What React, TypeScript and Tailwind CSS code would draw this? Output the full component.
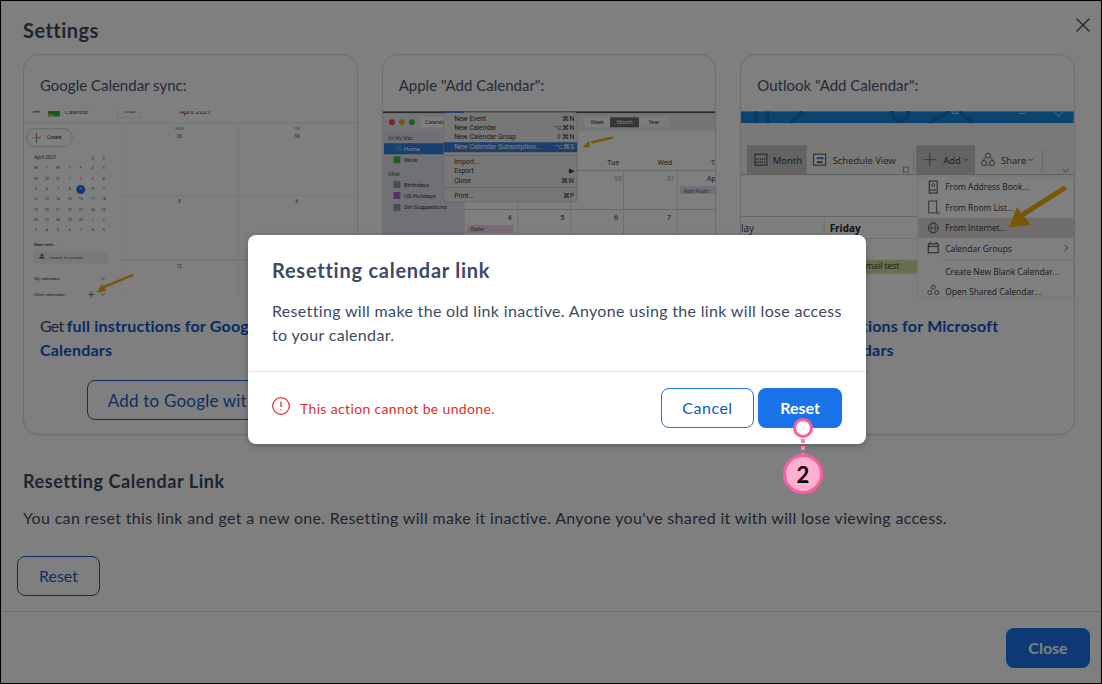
import React from "react";
import { X } from "lucide-react";

const T = ({ x, y, s = 4, c = "#3c4043", w, a, children }: any) => (
  <text x={x} y={y} fontSize={s} fill={c} fontWeight={w} textAnchor={a} fontFamily="Roboto, sans-serif">{children}</text>
);

const Arrow = ({ d, tip, w = 3 }: { d: string; tip: string; w?: number }) => (
  <g>
    <path d={d} stroke="#f0b010" strokeWidth={w} strokeLinecap="round" fill="none" />
    <path d={tip} fill="#f0b010" />
  </g>
);

const miniRows = [
  ["M", "T", "W", "T", "F", "S", "S"],
  ["29", "30", "31", "1", "2", "3", "4"],
  ["5", "6", "7", "8", "9", "10", "11"],
  ["12", "13", "14", "15", "16", "17", "18"],
  ["19", "20", "21", "22", "23", "24", "25"],
  ["26", "27", "28", "29", "30", "1", "2"],
  ["3", "4", "5", "6", "7", "8", "9"],
];
const miniX = [36, 47, 58, 70, 81, 93, 104];
const miniY = [169, 180, 190, 200, 211, 221, 231];

function GoogleShot() {
  return (
    <svg viewBox="24 111 334 187" className="block w-full h-[187px] bg-white">
      <rect x="33" y="111" width="7" height="1" fill="#555" />
      <rect x="48" y="110" width="12" height="6" fill="#34a853" />
      <rect x="48" y="114" width="6" height="2" fill="#fbbc04" />
      <T x="65" y="114" s={6} c="#5f6368">Calendar</T>
      <rect x="117.500" y="106" width="24" height="11" fill="none" stroke="#dadce0" strokeWidth="0.7" />
      <T x="123" y="113" s={5} c="#5f6368">Today</T>
      <T x="180" y="114" s={7} c="#3c4043">April 2021</T>
      <line x1="24" y1="122.500" x2="358" y2="122.500" stroke="#e3e5e8" />
      <line x1="121" y1="195.500" x2="358" y2="195.500" stroke="#e8eaed" />
      <line x1="121" y1="260.500" x2="358" y2="260.500" stroke="#dadce0" />
      <line x1="121.500" y1="123" x2="121.500" y2="298" stroke="#f6f6f8" />
      <line x1="239.500" y1="123" x2="239.500" y2="298" stroke="#f0f1f3" />
      <T x="180" y="130" s={3.6} a="middle" c="#70757a">MON</T>
      <T x="180" y="138" s={4.6} a="middle">29</T>
      <T x="298" y="130" s={3.6} a="middle" c="#70757a">TUE</T>
      <T x="298" y="138" s={4.6} a="middle">30</T>
      <T x="180" y="203" s={4.6} a="middle">5</T>
      <T x="298" y="203" s={4.6} a="middle">6</T>
      <T x="180" y="268" s={4.6} a="middle">12</T>
      <rect x="26.500" y="128.500" width="46" height="18" rx="9" fill="#fff" stroke="#d0d0d0" />
      <path d="M36.500 133v5" stroke="#ea4335" strokeWidth="1" />
      <path d="M36.500 138v5" stroke="#34a853" strokeWidth="1" />
      <path d="M32 137.500h5" stroke="#fbbc04" strokeWidth="1" />
      <path d="M37 137.500h4" stroke="#4285f4" strokeWidth="1" />
      <T x="47" y="139" s={5}>Create</T>
      <T x="34" y="159" s={5}>April 2021</T>
      <path d="M94 156l-2 2 2 2M103 156l2 2-2 2" fill="none" stroke="#5f6368" strokeWidth="0.7" />
      <circle cx="81" cy="189.500" r="4.500" fill="#1a73e8" />
      {miniRows.map((r, i) =>
        r.map((d, j) => (
          <T key={`n${i}-${j}`} x={miniX[j]} y={miniY[i]} s={3.4} a="middle" c={i === 2 && j === 4 ? "#ffffff" : "#3c4043"}>
            {d}
          </T>
        ))
      )}
      <T x="34" y="246" s={4.4} w={500}>Meet with...</T>
      <rect x="34" y="251" width="74" height="13" rx="1" fill="#f1f3f4" />
      <circle cx="42" cy="255.500" r="1.500" fill="#70757a" />
      <path d="M39 259c0-3 6-3 6 0z" fill="#70757a" />
      <T x="50" y="259" s={4.2} c="#5f6368">Search for people</T>
      <T x="34" y="280" s={4.4}>My calendars</T>
      <path d="M101.500 278l1.800 1.800 1.800-1.800" fill="none" stroke="#3c4043" strokeWidth="0.7" />
      <T x="34" y="296.500" s={4.4}>Other calendars</T>
      <path d="M91.500 292v6M88.500 295h6" stroke="#3c4043" strokeWidth="0.7" />
      <path d="M101.500 294l1.800 1.800 1.800-1.800" fill="none" stroke="#3c4043" strokeWidth="0.7" />
      <Arrow d="M133 275.500L104 287.500" tip="M97 293L102 284L107 291Z" w={2.500} />
    </svg>
  );
}

function AppleShot() {
  return (
    <svg viewBox="382 111 334 187" className="block w-full h-[187px] bg-white">
      <rect x="382" y="111" width="334" height="2" fill="#555" />
      <rect x="382" y="113" width="334" height="18" fill="#e8eaec" />
      <circle cx="391" cy="122" r="3" fill="#ed4a45" />
      <circle cx="401" cy="122" r="3" fill="#e7b52d" />
      <circle cx="411" cy="122" r="3" fill="#3fbb45" />
      <rect x="420" y="117" width="30" height="10" rx="1.500" fill="#fff" />
      <T x="424" y="124" s={5.500} c="#444">Calendars</T>
      <rect x="584" y="117" width="86" height="10" rx="1.500" fill="#f8f8f8" />
      <rect x="610" y="117" width="29" height="10" fill="#6a6a6a" />
      <T x="597" y="124" s={5.500} a="middle" c="#444">Week</T>
      <T x="624.500" y="124" s={5.500} a="middle" c="#fff">Month</T>
      <T x="654" y="124" s={5.500} a="middle" c="#444">Year</T>
      <rect x="382" y="131" width="81" height="167" fill="#dfe3e8" />
      <T x="387" y="140" s={5} c="#555">On My Mac</T>
      <rect x="383" y="143" width="80" height="11" fill="#2f7fe0" />
      <rect x="395" y="145" width="6" height="6" rx="1" fill="#3aa0c8" />
      <T x="403" y="150.500" s={6} c="#fff">Home</T>
      <rect x="392.500" y="156" width="7" height="7" rx="1" fill="#3fbb45" />
      <T x="403" y="162" s={6} c="#333">Work</T>
      <T x="387" y="176" s={5} c="#555">Other</T>
      <rect x="392.500" y="181" width="7" height="7" rx="1" fill="#8a9ab0" />
      <T x="403" y="186.500" s={6} c="#333">Birthdays</T>
      <rect x="392.500" y="192" width="7" height="7" rx="1" fill="#b060d0" />
      <T x="403" y="198" s={6} c="#333">US Holidays</T>
      <rect x="392.500" y="204" width="7" height="7" rx="1" fill="#8a9ab0" />
      <T x="403" y="209.500" s={6} c="#333">Siri Suggestions</T>
      <line x1="463" y1="170.500" x2="716" y2="170.500" stroke="#ccc" />
      <line x1="463" y1="209.500" x2="716" y2="209.500" stroke="#ccc" />
      {[463, 517, 570, 623, 677].map((x) => (
        <line key={x} x1={x + 0.5} y1="170" x2={x + 0.5} y2="298" stroke="#ddd" />
      ))}
      <T x="613" y="165" s={7.500} a="middle" c="#444">Tue</T>
      <T x="665" y="165" s={7.500} a="middle" c="#444">Wed</T>
      <T x="711" y="165" s={7.500} c="#444">Thu</T>
      <T x="618" y="181" s={7.500} a="middle" c="#aaa">30</T>
      <T x="671" y="181" s={7.500} a="middle" c="#aaa">31</T>
      <T x="707" y="181" s={7.500} c="#333">Apr</T>
      <rect x="680" y="186" width="36" height="8" fill="#e8d8f0" />
      <T x="684" y="192.500" s={5.200} c="#555">April Fools'</T>
      <T x="509" y="220" s={7.500} a="middle" c="#333">4</T>
      <T x="562" y="220" s={7.500} a="middle" c="#333">5</T>
      <T x="616" y="220" s={7.500} a="middle" c="#333">6</T>
      <T x="669" y="220" s={7.500} a="middle" c="#333">7</T>
      <rect x="466" y="225" width="47" height="8" fill="#f3d0ec" />
      <T x="470" y="231.500" s={5} c="#555">Easter</T>
      <rect x="443" y="112" width="134" height="90" rx="3" fill="#eeeeee" stroke="#bbb" strokeWidth="0.5" />
      <rect x="443" y="142" width="134" height="10" fill="#3e7fd6" />
      <rect x="443" y="111" width="20" height="1.500" fill="#2f7fe0" />
      {[
        ["New Event", "⌘N", 120.500],
        ["New Calendar", "⌥⌘N", 130],
        ["New Calendar Group", "⇧⌘N", 139],
        ["New Calendar Subscription...", "⌥⌘S", 148.500],
        ["Import...", "", 164],
        ["Export", "▶", 173],
        ["Close", "⌘W", 182.500],
        ["Print...", "⌘P", 197.500],
      ].map(([a, b, y]) => (
        <g key={a as string}>
          <T x="453.500" y={y} s={6.800} c={a === "New Calendar Subscription..." ? "#fff" : "#333"}>{a}</T>
          <T x="574" y={y} s={6.800} a="end" c={a === "New Calendar Subscription..." ? "#fff" : "#333"}>{b}</T>
        </g>
      ))}
      <line x1="443" y1="155.500" x2="577" y2="155.500" stroke="#ccc" />
      <line x1="443" y1="187.500" x2="577" y2="187.500" stroke="#ccc" />
      <Arrow d="M612 137.500L592 142" tip="M582 147L589 140.500L590 147Z" w={2.500} />
    </svg>
  );
}

function OutlookShot() {
  const Row = ({ y, t }: { y: number; t: string }) => (
    <text x="946" y={y} fontSize="8.500" fill="#333" fontFamily="'Open Sans', sans-serif">{t}</text>
  );
  return (
    <svg viewBox="741 111 334 187" className="block w-full h-[187px] bg-white">
      <rect x="741" y="111" width="334" height="12" fill="#1488e0" />
      <circle cx="901" cy="113" r="8" fill="none" stroke="#1272bc" strokeWidth="3" />
      <path d="M790 123l12-12M930 123l20-12M960 111l14 12M756 111v12M768 111v12" stroke="#1272bc" strokeWidth="3" fill="none" />
      <path d="M953 111v2h6v-2M1020 113h7M1055 111l5 5 5-5" stroke="#cfe4f5" strokeWidth="0.8" fill="none" />
      <rect x="741" y="123" width="334" height="51" fill="#f3f2f1" />
      <rect x="747" y="145" width="60" height="29" fill="#c8c6c4" />
      <rect x="755" y="154" width="12" height="11" fill="none" stroke="#444" />
      <path d="M756 159h10M756 162h10" stroke="#444" strokeWidth="1.500" strokeDasharray="1 1" />
      <text x="773" y="164" fontSize="9.500" fill="#333" fontFamily="'Open Sans', sans-serif">Month</text>
      <rect x="814" y="154" width="12" height="11" fill="#fff" stroke="#444" />
      <rect x="817" y="157" width="7" height="2" fill="#3a7fd0" />
      <rect x="817" y="161" width="6" height="2" fill="#8a3aa0" />
      <text x="833" y="164" fontSize="9.500" fill="#444" fontFamily="'Open Sans', sans-serif">Schedule View</text>
      <rect x="904" y="167" width="5" height="5" fill="none" stroke="#777" strokeWidth="0.7" />
      <line x1="914.500" y1="149" x2="914.500" y2="171" stroke="#ccc" />
      <rect x="917" y="145" width="59" height="29" fill="#c8c6c4" />
      <path d="M930.500 153v13M924 159.500h13" stroke="#2e9b4f" strokeWidth="1" />
      <text x="944" y="164" fontSize="9.500" fill="#333" fontFamily="'Open Sans', sans-serif">Add</text>
      <path d="M965 158.500l2 2 2-2" stroke="#333" fill="none" strokeWidth="0.8" />
      <circle cx="989" cy="155.500" r="2.500" fill="none" stroke="#444" strokeWidth="0.8" />
      <circle cx="985" cy="163" r="2.500" fill="none" stroke="#444" strokeWidth="0.8" />
      <circle cx="993" cy="163" r="2.500" fill="none" stroke="#444" strokeWidth="0.8" />
      <path d="M986 157l-2 4M992 157l2 4M987.500 165h3" stroke="#444" strokeWidth="0.7" />
      <text x="1002" y="164" fontSize="9.500" fill="#444" fontFamily="'Open Sans', sans-serif">Share</text>
      <path d="M1030 158.500l2 2 2-2" stroke="#333" fill="none" strokeWidth="0.8" />
      <line x1="1043.500" y1="149" x2="1043.500" y2="171" stroke="#ccc" />
      <path d="M1064 169l3 3 3-3" stroke="#444" fill="none" strokeWidth="0.8" />
      <line x1="741" y1="174.500" x2="1075" y2="174.500" stroke="#bbb" />
      <line x1="741" y1="216.500" x2="918" y2="216.500" stroke="#ccc" />
      <line x1="741" y1="238.500" x2="918" y2="238.500" stroke="#ddd" />
      <line x1="824.500" y1="216" x2="824.500" y2="298" stroke="#ddd" />
      <text x="741" y="232" fontSize="10" fill="#333" fontFamily="'Open Sans', sans-serif">lay</text>
      <text x="830" y="232" fontSize="10" fontWeight="700" fill="#222" fontFamily="'Open Sans', sans-serif">Friday</text>
      <rect x="866" y="260" width="52" height="14" fill="#c8e0a0" />
      <text x="866" y="269" fontSize="8.500" fill="#333" fontFamily="'Open Sans', sans-serif">mail test</text>
      <rect x="918" y="176" width="157" height="122" fill="#fff" stroke="#ddd" strokeWidth="0.5" />
      <rect x="919" y="218" width="156" height="20" fill="#dedcda" />
      <line x1="943" y1="260.500" x2="1075" y2="260.500" stroke="#e5e5e5" />
      <Row y={190} t="From Address Book..." />
      <Row y={211} t="From Room List..." />
      <Row y={231} t="From Internet..." />
      <Row y={252} t="Calendar Groups" />
      <Row y={275} t="Create New Blank Calendar..." />
      <Row y={295} t="Open Shared Calendar..." />
      <rect x="930" y="181" width="8" height="12" fill="none" stroke="#444" />
      <circle cx="934" cy="185" r="1.500" fill="none" stroke="#444" strokeWidth="0.7" />
      <path d="M931 190h6" stroke="#444" />
      <rect x="929.500" y="201" width="8" height="12" fill="none" stroke="#444" strokeWidth="0.8" />
      <path d="M937 213h4M939 211v4" stroke="#6aa86a" strokeWidth="0.8" />
      <circle cx="934" cy="228" r="5" fill="none" stroke="#444" strokeWidth="0.8" />
      <ellipse cx="934" cy="228" rx="2.200" ry="5" fill="none" stroke="#444" strokeWidth="0.6" />
      <path d="M929 228h10" stroke="#444" strokeWidth="0.6" />
      <rect x="929" y="244" width="10" height="9" fill="none" stroke="#444" />
      <path d="M929 246.500h10M931 242v2M937 242v2" stroke="#444" />
      <path d="M1066 245l3 3-3 3" stroke="#555" fill="none" strokeWidth="0.8" />
      <circle cx="934" cy="287.500" r="2" fill="none" stroke="#444" strokeWidth="0.8" />
      <circle cx="930.500" cy="293" r="2" fill="none" stroke="#444" strokeWidth="0.8" />
      <circle cx="937.500" cy="293" r="2" fill="none" stroke="#444" strokeWidth="0.8" />
      <Arrow d="M1065 188.500L1025 214" tip="M1010 227.500L1018 207L1032 225Z" w={5} />
    </svg>
  );
}

function Card({ title, shot, children }: { title: string; shot: React.ReactNode; children?: React.ReactNode }) {
  return (
    <div className="flex-1 min-w-0 rounded-2xl border border-[#d5dde8] overflow-hidden shadow-[0_1px_2px_rgba(0,0,0,0.08)]">
      <div className="h-[56px] pl-4 pt-[18px] text-[15px] leading-6 text-[#4a5873]">{title}</div>
      {shot}
      <div className="px-4 pt-4 text-[16px] leading-6 text-[#3d4a63]">{children}</div>
    </div>
  );
}

export default function App() {
  return (
    <div className="relative w-[1102px] h-[684px] box-border overflow-hidden bg-white border border-black flex flex-col [font-family:Lato,sans-serif]">
      <div className="px-[22px] pt-[17px] h-[53px] text-[20px] leading-6 font-bold tracking-[0.45px] text-[#3d4a63]">Settings</div>
      <button className="absolute right-[6px] top-[12px] text-[#3d4a63]"><X size={24} strokeWidth={1.4} /></button>
      <div className="flex gap-6 px-[22px] pr-[26px] h-[381px]">
        <Card title="Google Calendar sync:" shot={<GoogleShot />}>
          <span className="tracking-[-0.8px]">Get </span><a className="font-bold tracking-[0.2px] text-[#0b57c8]">full instructions for Google<br />Calendars</a>
          <div className="mt-[18px] flex justify-center">
            <button className="h-10 w-[207px] pl-5 pt-[2px] text-left rounded-lg border border-[#1a5fc0] text-[#1a5fc0] text-[17px] tracking-[0.2px] whitespace-nowrap overflow-hidden">Add to Google with Calendar</button>
          </div>
        </Card>
        <Card title={'Apple "Add Calendar":'} shot={<AppleShot />}>
          <span className="tracking-[-0.8px]">Get </span><a className="font-bold tracking-[0.2px] text-[#0b57c8]">full instructions for Apple<br />Calendars</a>
        </Card>
        <Card title={'Outlook "Add Calendar":'} shot={<OutlookShot />}>
          <span className="tracking-[-0.8px]">Get </span><a className="font-bold tracking-[0.2px] text-[#0b57c8]">full instructions for Microsoft<br />Outlook Calendars</a>
        </Card>
      </div>
      <div className="px-[22px] mt-[34px] text-[18px] leading-6 font-bold tracking-[0.55px] text-[#3d4a63]">Resetting Calendar Link</div>
      <div className="px-[22px] mt-[13px] text-[16px] leading-6 tracking-[0.33px] text-[#3d4a63] whitespace-nowrap">You can reset this link and get a new one. Resetting will make it inactive. Anyone you've shared it with will lose viewing access.</div>
      <div className="px-4 mt-[26px]">
        <button className="h-10 w-[83px] rounded-lg border border-[#1a5fc0] text-[#1a5fc0] text-[16px]">Reset</button>
      </div>
      <div className="mt-[15px] border-t border-[#d8d8e0]" />
      <div className="mt-4 pr-[11px] flex justify-end">
        <button className="h-10 w-[84px] rounded-lg bg-[#1a73e8] text-white text-[16px] font-bold">Close</button>
      </div>

      <div className="absolute inset-0 bg-black/50" />

      <div className="absolute left-[247px] top-[234px] w-[618px] h-[209px] bg-white rounded-lg shadow-[0_2px_6px_rgba(0,0,0,0.25)] flex flex-col">
        <div className="px-6 pt-[23px] text-[20px] leading-6 font-bold tracking-[0.75px] text-[#3d4a63]">Resetting calendar link</div>
        <div className="px-6 mt-[17px] text-[16px] leading-6 tracking-[0.33px] text-[#3d4a63]">Resetting will make the old link inactive. Anyone using the link will lose access<br />to your calendar.</div>
        <div className="mt-6 border-t border-[#e2e2ea]" />
        <div className="flex items-center px-6 pt-4">
          <svg width="18" height="18" viewBox="0 0 18 18" className="shrink-0 -mt-[4px]">
            <circle cx="9" cy="9" r="8.300" fill="none" stroke="#e02d2d" strokeWidth="1.200" />
            <path d="M9 4.500v5.500M9 12.500v1" stroke="#e02d2d" strokeWidth="1.300" />
          </svg>
          <span className="ml-[10px] text-[14px] tracking-[0.35px] text-[#e02d2d] whitespace-nowrap">This action cannot be undone.</span>
          <div className="ml-auto flex gap-1">
            <button className="h-10 w-[93px] rounded-lg border border-[#1a73e8] text-[#0b57c8] text-[16px] tracking-[0.5px]">Cancel</button>
            <button className="h-10 w-[84px] rounded-lg bg-[#1a73e8] text-white text-[16px] font-bold">Reset</button>
          </div>
        </div>
      </div>

      <div className="absolute left-[783px] top-[417px] w-[38px] flex flex-col items-center">
        <div className="w-5 h-5 rounded-full bg-white border-[3px] border-[#ff5c9e] box-border" />
        <div className="h-[15px] w-[4px] mt-[1px] bg-[repeating-linear-gradient(to_bottom,#ff7fb2_0,#ff7fb2_4px,transparent_4px,transparent_7px)]" />
        <div className="w-[40px] h-[40px] shrink-0 rounded-full bg-[#ffb0d0] border-[3px] border-[#ff5c9e] box-border flex items-center justify-center text-[22px] font-bold text-black">2</div>
      </div>
    </div>
  );
}
